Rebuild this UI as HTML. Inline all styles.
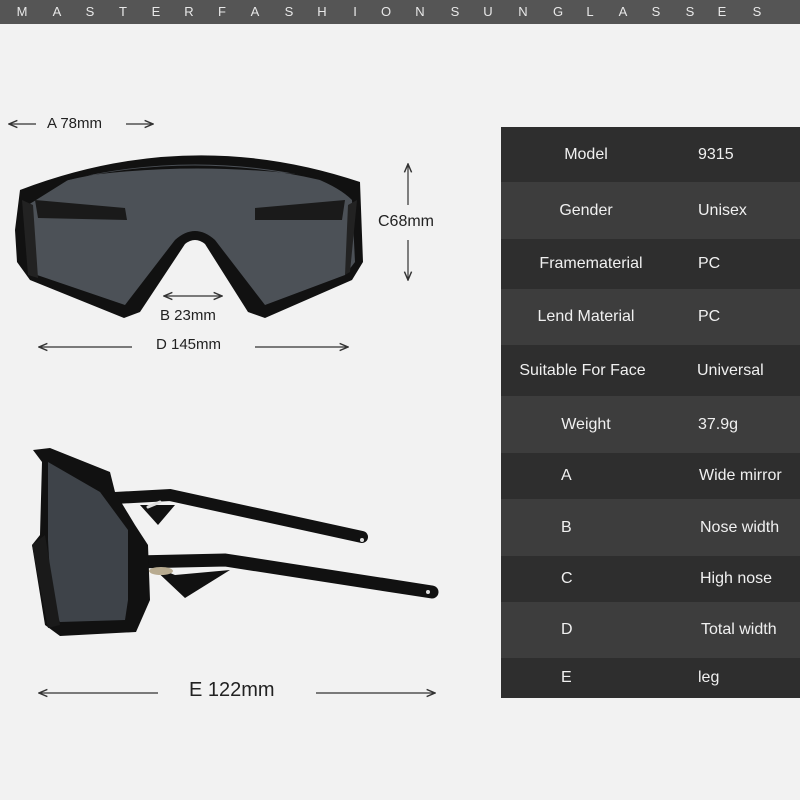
<!DOCTYPE html>
<html><head><meta charset="utf-8">
<style>
*{margin:0;padding:0;box-sizing:border-box}
body{width:800px;height:800px;background:#f2f2f2;position:relative;overflow:hidden;font-family:"Liberation Sans",sans-serif}
.bar{position:absolute;left:0;top:0;width:800px;height:24px;background:#555}
.bar span{position:absolute;top:4px;color:#e8e8e8;font-size:13px;width:12px;text-align:center}
.tbl{position:absolute;left:501px;top:127px;width:299px;height:571px}
.row{position:relative;color:#f0f0f0;font-size:16px}
.row .k{position:absolute;top:50%;transform:translateY(-50%);text-align:center;width:170px;left:0}
.row .v{position:absolute;top:50%;transform:translateY(-50%);left:197px}
.d{background:#2e2e2e}.l{background:#3d3d3d}
.lab{position:absolute;color:#222;font-size:16px}
</style></head><body>
<div class="bar">
<span style="left:16px">M</span><span style="left:51px">A</span><span style="left:84px">S</span><span style="left:117px">T</span><span style="left:150px">E</span><span style="left:183px">R</span><span style="left:216px">F</span><span style="left:249px">A</span><span style="left:283px">S</span><span style="left:316px">H</span><span style="left:349px">I</span><span style="left:380px">O</span><span style="left:414px">N</span><span style="left:449px">S</span><span style="left:482px">U</span><span style="left:517px">N</span><span style="left:552px">G</span><span style="left:584px">L</span><span style="left:617px">A</span><span style="left:650px">S</span><span style="left:684px">S</span><span style="left:716px">E</span><span style="left:751px">S</span>
</div>

<svg style="position:absolute;left:0;top:0" width="500" height="800" viewBox="0 0 500 800">
<defs><marker id="ar" markerWidth="8" markerHeight="8" refX="7" refY="4" orient="auto"><path d="M0,1 L7,4 L0,7" fill="none" stroke="#333" stroke-width="1.2"/></marker></defs>
<g stroke="#333" stroke-width="1.2" fill="none" marker-end="url(#ar)">
<line x1="36" y1="124" x2="9" y2="124"/>
<line x1="126" y1="124" x2="153" y2="124"/>
<line x1="408" y1="205" x2="408" y2="164"/>
<line x1="408" y1="240" x2="408" y2="280"/>
<line x1="200" y1="296" x2="222" y2="296"/>
<line x1="200" y1="296" x2="164" y2="296"/>
<line x1="132" y1="347" x2="39" y2="347"/>
<line x1="255" y1="347" x2="348" y2="347"/>
<line x1="158" y1="693" x2="39" y2="693"/>
<line x1="316" y1="693" x2="435" y2="693"/>
</g>
<!-- front view -->
<path d="M20,190 Q190,125 360,182 L363,262 L352,280 L265,318 L248,312 L205,244 Q195,236 185,244 L140,312 L124,318 L30,280 L17,262 L15,230 Z" fill="#111"/>
<path d="M28,205 Q60,185 68,180 Q190,150 315,178 Q340,188 352,200 L355,262 L345,275 L265,305 L215,240 Q195,222 175,240 L125,305 L37,275 L28,262 Z" fill="#4c5157"/>
<path d="M60,182 Q190,150 320,180 L312,176 Q190,160 70,178 Z" fill="#111"/>
<path d="M35,200 L125,208 L127,220 L38,218 Z M255,208 L345,200 L342,220 L255,220 Z" fill="#1a1a1a"/>
<path d="M22,200 L28,275 L38,278 L33,205 Z M357,200 L350,272 L345,275 L348,205 Z" fill="#222"/>
<!-- side view -->
<path d="M115,498 L170,495 L362,537" stroke="#111" stroke-width="12" stroke-linecap="round" fill="none"/>
<path d="M135,562 L225,560 L432,592" stroke="#111" stroke-width="13" stroke-linecap="round" fill="none"/>
<path d="M150,565 L175,575 L230,570 L185,598 Z" fill="#111"/>
<path d="M140,505 L175,505 L158,525 Z" fill="#111"/>
<path d="M33,450 L50,448 L110,472 L115,492 L135,525 L148,545 L150,600 L136,632 L60,636 L45,625 L32,545 L40,535 L42,462 Z" fill="#111"/>
<path d="M48,462 L100,492 L128,530 L128,600 L125,620 L60,622 L52,610 L48,540 Z" fill="#3e4349"/>
<path d="M32,545 L45,535 L60,625 L48,628 Z" fill="#1a1a1a"/>
<ellipse cx="161" cy="571" rx="12" ry="4" fill="#b8ab90"/>
<line x1="148" y1="507" x2="160" y2="502" stroke="#ddd" stroke-width="3" stroke-linecap="round"/>
<circle cx="362" cy="540" r="2" fill="#ddd"/>
<circle cx="428" cy="592" r="2" fill="#ddd"/>
</svg>
<div class="lab" style="left:47px;top:115px;font-size:15px">A 78mm</div>
<div class="lab" style="left:378px;top:213px">C68mm</div>
<div class="lab" style="left:160px;top:307px;font-size:15px">B 23mm</div>
<div class="lab" style="left:156px;top:336px;font-size:15px">D 145mm</div>
<div class="lab" style="left:189px;top:679px;font-size:20px">E 122mm</div>

<div class="tbl">
<div class="row d" style="height:55px"><span class="k">Model</span><span class="v">9315</span></div>
<div class="row l" style="height:57px"><span class="k">Gender</span><span class="v">Unisex</span></div>
<div class="row d" style="height:50px"><span class="k" style="left:5px">Framematerial</span><span class="v">PC</span></div>
<div class="row l" style="height:56px"><span class="k">Lend Material</span><span class="v">PC</span></div>
<div class="row d" style="height:51px"><span class="k" style="left:-5px;width:173px">Suitable For Face</span><span class="v" style="left:196px">Universal</span></div>
<div class="row l" style="height:57px"><span class="k">Weight</span><span class="v">37.9g</span></div>
<div class="row d" style="height:46px"><span class="k" style="left:60px;width:auto">A</span><span class="v" style="left:198px">Wide mirror</span></div>
<div class="row l" style="height:57px"><span class="k" style="left:60px;width:auto">B</span><span class="v" style="left:199px">Nose width</span></div>
<div class="row d" style="height:46px"><span class="k" style="left:60px;width:auto">C</span><span class="v" style="left:199px">High nose</span></div>
<div class="row l" style="height:56px"><span class="k" style="left:60px;width:auto">D</span><span class="v" style="left:200px">Total width</span></div>
<div class="row d" style="height:40px"><span class="k" style="left:60px;width:auto">E</span><span class="v">leg</span></div>
</div>
</body></html>
